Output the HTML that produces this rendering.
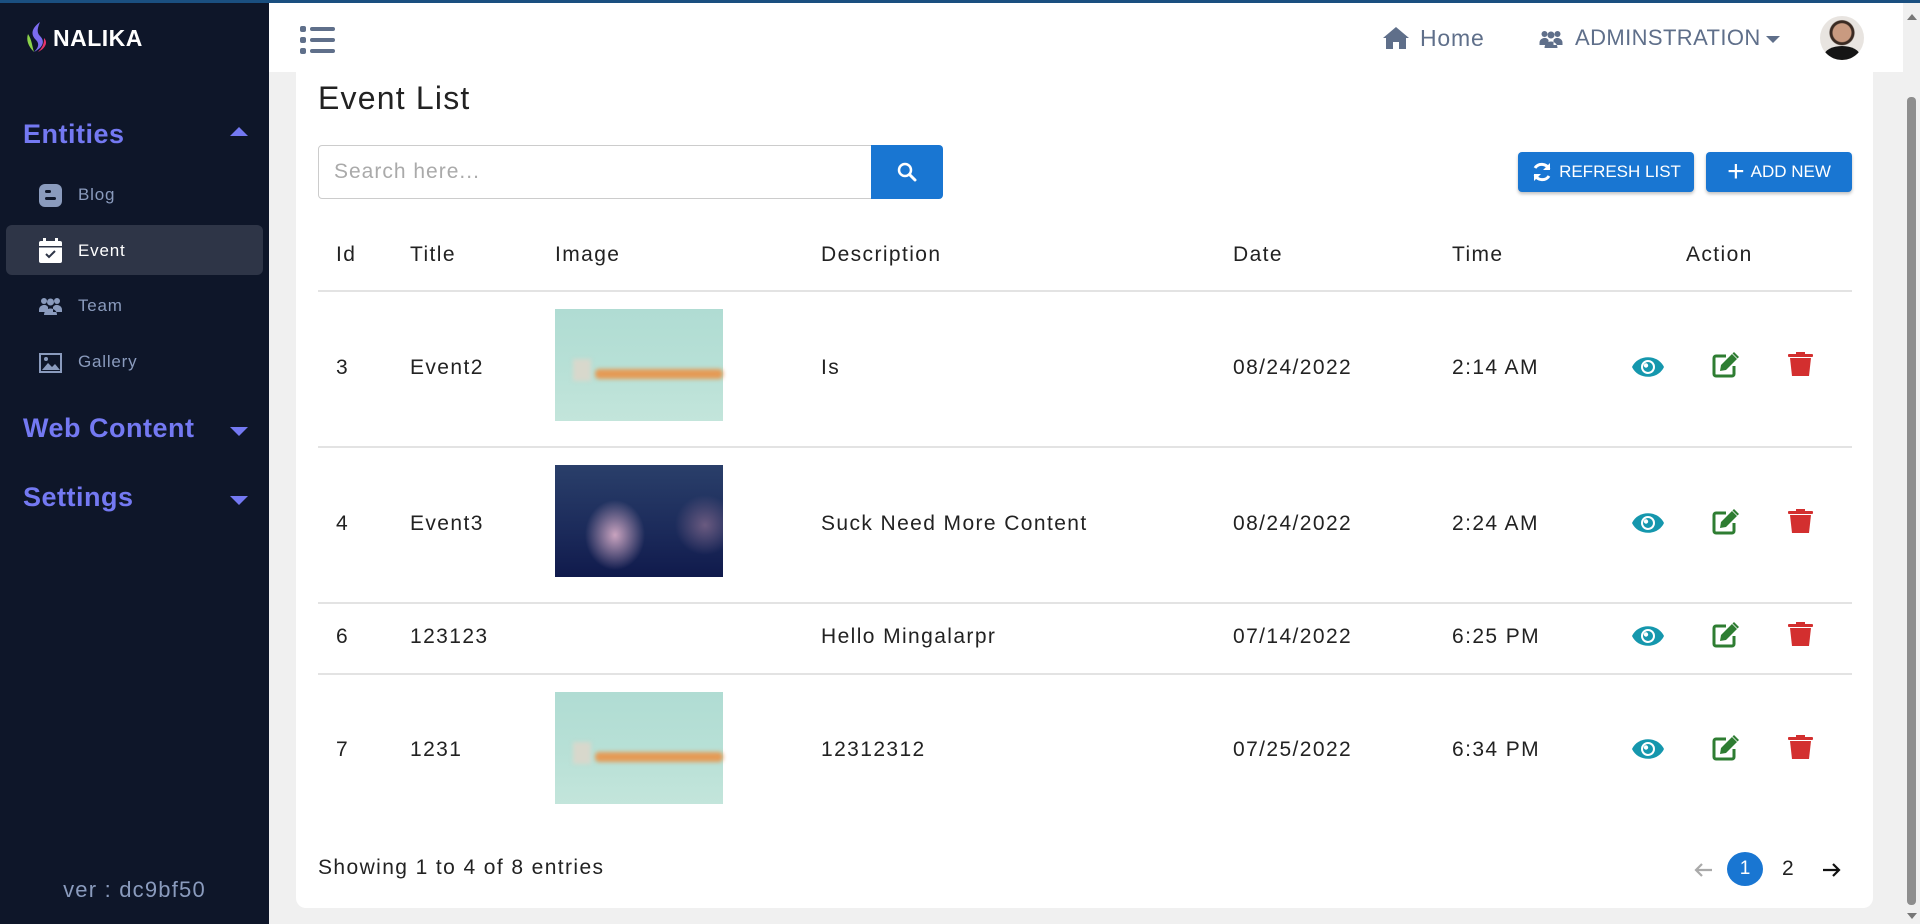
<!DOCTYPE html>
<html><head><meta charset="utf-8"><style>
*{box-sizing:border-box;margin:0;padding:0}
body{width:1920px;height:924px;overflow:hidden;background:#f0f0f0;font-family:"Liberation Sans",sans-serif;position:relative}
.topbar{position:absolute;left:0;top:0;width:1920px;height:3px;background:#1a4f80;z-index:5}
.side{position:absolute;left:0;top:3px;width:269px;height:921px;background:#0e1629}
.abs{position:absolute}
.sec{position:absolute;left:23px;font-size:27px;font-weight:bold;color:#7479f2;letter-spacing:0.5px}
.caret{position:absolute;left:230px;width:0;height:0;border-left:9px solid transparent;border-right:9px solid transparent}
.item{position:absolute;left:78px;font-size:17px;color:#8a9bbd;letter-spacing:0.8px}
.header{position:absolute;left:269px;top:3px;width:1634px;height:69px;background:#fff}
.card{position:absolute;left:296px;top:72px;width:1577px;height:836px;background:#fff;border-radius:0 0 10px 10px}
.t{position:absolute;font-size:21px;color:#222;transform:translateY(-50%);letter-spacing:1.4px;white-space:nowrap}
.th{font-size:21px}
.line{position:absolute;left:318px;width:1534px;height:2px;background:#e3e3e3}
.btn{position:absolute;background:#1976d2;color:#fff;border-radius:4px;font-size:17px;display:flex;align-items:center;justify-content:center;box-shadow:0 2px 3px rgba(0,0,0,.25)}
.img1{position:absolute;left:555px;width:168px;height:112px;background:linear-gradient(180deg,#b0dcd3,#b7e0d6 50%,#c3e5db)}
.img2{position:absolute;left:555px;width:168px;height:112px;background:radial-gradient(ellipse 30px 35px at 60px 70px,#c9a3bf,transparent),radial-gradient(ellipse 30px 30px at 150px 60px,#6a5a80,transparent),linear-gradient(180deg,#2a3f6a,#1b2a5a 60%,#101a4c)}
</style></head><body>
<div class="topbar"></div>
<div class="side">
  <svg class="abs" style="left:26px;top:19px" width="24" height="32" viewBox="0 0 24 32"><path d="M14 0C6 6 4 12 10 18 14 22 12 26 8 30 16 26 20 20 14 14 10 10 12 5 14 0Z" fill="#7c6cf0"/><path d="M2 12C0 18 2 24 8 30 6 24 6 18 2 12Z" fill="#8bd34a"/><path d="M18 16C22 20 20 26 12 30 18 24 18 20 18 16Z" fill="#e8336b"/></svg>
  <div class="abs" style="left:53px;top:22px;font-size:23px;font-weight:bold;color:#fff;letter-spacing:0.5px">NALIKA</div>
  <div class="sec" style="top:116px">Entities</div>
  <div class="caret" style="top:124px;border-bottom:9px solid #7479f2"></div>
  <svg class="abs" style="left:39px;top:181px" width="23" height="23" viewBox="0 0 23 23"><rect width="23" height="23" rx="6" fill="#8a9bbd"/><rect x="6" y="6" width="6" height="3" rx="1.5" fill="#0e1629"/><rect x="6" y="13" width="11" height="3" rx="1.5" fill="#0e1629"/></svg>
  <div class="item" style="top:182px">Blog</div>
  <div class="abs" style="left:6px;top:222px;width:257px;height:50px;background:#2e3547;border-radius:6px"></div>
  <svg class="abs" style="left:39px;top:235px" width="23" height="25" viewBox="0 0 23 25"><rect x="4" y="0" width="3" height="5" fill="#fff"/><rect x="16" y="0" width="3" height="5" fill="#fff"/><rect y="3" width="23" height="22" rx="2" fill="#fff"/><rect y="8" width="23" height="1.5" fill="#2e3547"/><path d="M7 16l3 3 6-6" stroke="#2e3547" stroke-width="2" fill="none"/></svg>
  <div class="item" style="top:238px;color:#fff">Event</div>
  <svg class="abs" style="left:39px;top:294px" width="23" height="18" viewBox="0 0 23 18"><circle cx="5" cy="4" r="3" fill="#8a9bbd"/><circle cx="18" cy="4" r="3" fill="#8a9bbd"/><circle cx="11.5" cy="5" r="3.5" fill="#8a9bbd"/><path d="M0 13a5 5 0 0 1 9-3v5H0Z M23 13a5 5 0 0 0-9-3v5h9Z M5 18a6.5 6.5 0 0 1 13 0Z" fill="#8a9bbd"/></svg>
  <div class="item" style="top:293px">Team</div>
  <svg class="abs" style="left:39px;top:350px" width="23" height="20" viewBox="0 0 23 20"><rect x="1" y="1" width="21" height="18" fill="none" stroke="#8a9bbd" stroke-width="2"/><path d="M3 17l6-7 4 4 3-3 5 6Z" fill="#8a9bbd"/><circle cx="7" cy="6" r="2" fill="#8a9bbd"/></svg>
  <div class="item" style="top:349px">Gallery</div>
  <div class="sec" style="top:410px">Web Content</div>
  <div class="caret" style="top:424px;border-top:9px solid #7479f2"></div>
  <div class="sec" style="top:479px">Settings</div>
  <div class="caret" style="top:493px;border-top:9px solid #7479f2"></div>
  <div class="abs" style="left:0;width:269px;text-align:center;top:874px;font-size:22px;color:#8a9bbd;letter-spacing:1.2px">ver : dc9bf50</div>
</div>
<div class="card"></div>
<div class="header">
  <svg class="abs" style="left:31px;top:22px" width="35" height="30" viewBox="0 0 35 30"><g fill="#5f6f8a"><rect x="0" y="1" width="6" height="6" rx="2"/><rect x="0" y="12" width="6" height="6" rx="2"/><rect x="0" y="23" width="6" height="6" rx="2"/><rect x="10" y="2" width="25" height="4" rx="2"/><rect x="10" y="13" width="25" height="4" rx="2"/><rect x="10" y="24" width="25" height="4" rx="2"/></g></svg>
  <svg class="abs" style="left:1114px;top:24px" width="26" height="22" viewBox="0 0 26 22"><path d="M13 0L0 11h3v11h7v-7h6v7h7V11h3Z" fill="#5f6f8a"/></svg>
  <div class="abs" style="left:1151px;top:22px;font-size:23px;color:#5f6f8a;letter-spacing:0.8px">Home</div>
  <svg class="abs" style="left:1270px;top:27px" width="24" height="18" viewBox="0 0 23 18"><circle cx="5" cy="4" r="3" fill="#5f6f8a"/><circle cx="18" cy="4" r="3" fill="#5f6f8a"/><circle cx="11.5" cy="5" r="3.5" fill="#5f6f8a"/><path d="M0 13a5 5 0 0 1 9-3v5H0Z M23 13a5 5 0 0 0-9-3v5h9Z M5 18a6.5 6.5 0 0 1 13 0Z" fill="#5f6f8a"/></svg>
  <div class="abs" style="left:1306px;top:22px;font-size:22px;color:#5f6f8a;letter-spacing:0.4px">ADMINSTRATION</div>
  <div class="abs" style="left:1497px;top:33px;border-left:7px solid transparent;border-right:7px solid transparent;border-top:7px solid #5f6f8a"></div>
  <div class="abs" style="left:1551px;top:13px;width:44px;height:44px;border-radius:50%;background:radial-gradient(circle at 50% 38%,#c99a80 0 9px,#3a2a22 10px 12px,#e8e4e0 13px);overflow:hidden"><div style="position:absolute;left:4px;top:30px;width:36px;height:20px;border-radius:50% 50% 0 0;background:#151515"></div></div>
</div>
<div class="abs" style="left:1903px;top:72px;width:17px;height:852px;background:#f0f0f0"></div>
<div class="abs" style="left:1907px;top:97px;width:9px;height:808px;background:#8e8e8e;border-radius:4px"></div>
<div class="abs" style="left:1907px;top:14px;border-left:5px solid transparent;border-right:5px solid transparent;border-bottom:6px solid #777"></div>
<div class="abs" style="left:1907px;top:913px;border-left:5px solid transparent;border-right:5px solid transparent;border-top:6px solid #777"></div>

<div class="abs" style="left:318px;top:80px;font-size:32px;color:#222;letter-spacing:1.2px">Event List</div>
<div class="abs" style="left:318px;top:145px;width:555px;height:54px;border:1px solid #ccc;border-radius:4px 0 0 4px"></div>
<div class="abs" style="left:334px;top:160px;font-size:21px;color:#aaa;letter-spacing:1px">Search here...</div>
<div class="abs" style="left:871px;top:145px;width:72px;height:54px;background:#1976d2;border-radius:0 4px 4px 0"></div>
<svg class="abs" style="left:897px;top:162px" width="20" height="20" viewBox="0 0 20 20"><circle cx="8" cy="8" r="6" stroke="#fff" stroke-width="2.5" fill="none"/><path d="M12.5 12.5L18 18" stroke="#fff" stroke-width="3" stroke-linecap="round"/></svg>
<div class="btn" style="left:1518px;top:152px;width:176px;height:40px"><svg width="22" height="22" viewBox="0 0 22 22" style="margin-right:6px"><path d="M18 8A8 8 0 0 0 4 7M4 14a8 8 0 0 0 14 1" stroke="#fff" stroke-width="3" fill="none"/><path d="M19 2v7h-7Z M3 20v-7h7Z" fill="#fff"/></svg>REFRESH LIST</div>
<div class="btn" style="left:1706px;top:152px;width:146px;height:40px"><span style="font-size:30px;margin-right:6px;line-height:1">+</span>ADD NEW</div>

<div class="t th" style="left:336px;top:255px">Id</div>
<div class="t th" style="left:410px;top:255px">Title</div>
<div class="t th" style="left:555px;top:255px">Image</div>
<div class="t th" style="left:821px;top:255px">Description</div>
<div class="t th" style="left:1233px;top:255px">Date</div>
<div class="t th" style="left:1452px;top:255px">Time</div>
<div class="t th" style="left:1686px;top:255px">Action</div>
<div class="line" style="top:290px"></div>

<div class="t" style="left:336px;top:368px">3</div><div class="t" style="left:410px;top:368px">Event2</div>
<div class="img1" style="top:309px"><div style="position:absolute;left:40px;top:60px;width:128px;height:10px;background:#e59a55;border-radius:4px;filter:blur(2px)"></div><div style="position:absolute;left:18px;top:50px;width:18px;height:22px;background:#d8d8cc;filter:blur(2px)"></div></div>
<div class="t" style="left:821px;top:368px">Is</div><div class="t" style="left:1233px;top:368px">08/24/2022</div><div class="t" style="left:1452px;top:368px">2:14 AM</div>
<div class="line" style="top:446px"></div>

<div class="t" style="left:336px;top:524px">4</div><div class="t" style="left:410px;top:524px">Event3</div>
<div class="img2" style="top:465px"></div>
<div class="t" style="left:821px;top:524px">Suck Need More Content</div><div class="t" style="left:1233px;top:524px">08/24/2022</div><div class="t" style="left:1452px;top:524px">2:24 AM</div>
<div class="line" style="top:602px"></div>

<div class="t" style="left:336px;top:637px">6</div><div class="t" style="left:410px;top:637px">123123</div>
<div class="t" style="left:821px;top:637px">Hello Mingalarpr</div><div class="t" style="left:1233px;top:637px">07/14/2022</div><div class="t" style="left:1452px;top:637px">6:25 PM</div>
<div class="line" style="top:673px"></div>

<div class="t" style="left:336px;top:750px">7</div><div class="t" style="left:410px;top:750px">1231</div>
<div class="img1" style="top:692px"><div style="position:absolute;left:40px;top:60px;width:128px;height:10px;background:#e59a55;border-radius:4px;filter:blur(2px)"></div><div style="position:absolute;left:18px;top:50px;width:18px;height:22px;background:#d8d8cc;filter:blur(2px)"></div></div>
<div class="t" style="left:821px;top:750px">12312312</div><div class="t" style="left:1233px;top:750px">07/25/2022</div><div class="t" style="left:1452px;top:750px">6:34 PM</div>

<svg width="0" height="0" style="position:absolute"><defs>
<g id="eye"><path d="M0 11C6 -2 26 -2 32 11 26 24 6 24 0 11Z" fill="#1597ad"/><circle cx="16" cy="11" r="7" fill="#fff"/><circle cx="16" cy="11" r="5" fill="#1597ad"/><circle cx="14" cy="9.5" r="2.2" fill="#fff"/></g>
<g id="edit"><path d="M14 4H4a2 2 0 0 0-2 2v16a2 2 0 0 0 2 2h16a2 2 0 0 0 2-2V14" stroke="#2e7d32" stroke-width="3" fill="none"/><path d="M8 19l1-6L20 2l5 5-11 11Z" fill="#2e7d32"/><path d="M22 0l5 5 -1.5 1.5-5-5Z" fill="#2e7d32"/></g>
<g id="del"><rect x="0" y="2" width="25" height="3" rx="1" fill="#d32f2f"/><rect x="8" y="0" width="9" height="3" fill="#d32f2f"/><path d="M2 6h21l-2 18H4Z" fill="#d32f2f"/></g>
</defs></svg>
<svg class="abs" style="left:0;top:0" width="1920" height="924">
<use href="#eye" x="1632" y="356"/><use href="#edit" x="1712" y="352"/><use href="#del" x="1788" y="352"/>
<use href="#eye" x="1632" y="512"/><use href="#edit" x="1712" y="509"/><use href="#del" x="1788" y="509"/>
<use href="#eye" x="1632" y="625"/><use href="#edit" x="1712" y="622"/><use href="#del" x="1788" y="622"/>
<use href="#eye" x="1632" y="738"/><use href="#edit" x="1712" y="735"/><use href="#del" x="1788" y="735"/>
<path d="M1712 870h-16m6-6l-6 6 6 6" stroke="#aaa" stroke-width="2.2" fill="none"/>
<path d="M1823 870h16m-6-6l6 6-6 6" stroke="#111" stroke-width="2.2" fill="none"/>
</svg>
<div class="t" style="left:318px;top:868px">Showing 1 to 4 of 8 entries</div>
<div class="abs" style="left:1727px;top:852px;width:36px;height:34px;border-radius:50%;background:#1976d2;color:#fff;font-size:19px;text-align:center;line-height:34px">1</div>
<div class="t" style="left:1782px;top:869px">2</div>
</body></html>
